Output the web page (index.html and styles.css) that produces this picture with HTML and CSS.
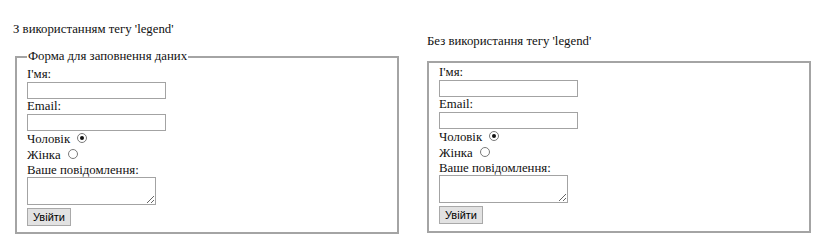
FILE: index.html
```html
<!DOCTYPE html>
<html lang="uk">
<head>
<meta charset="utf-8">
<title>Форми</title>
<link rel="stylesheet" href="styles.css">
</head>
<body>
<div class="page">
  <div class="col col-left">
    <p class="title">З використанням тегу 'legend'</p>
    <fieldset class="box fs">
      <legend class="legend">Форма для заповнення даних</legend>
      <label class="lbl">І'мя:</label>
      <input class="txt" type="text">
      <label class="lbl">Email:</label>
      <input class="txt" type="text">
      <div class="radio-row">Чоловік <input class="radio" type="radio" name="g1" checked></div>
      <div class="radio-row">Жінка <input class="radio" type="radio" name="g1"></div>
      <label class="lbl lbl-msg">Ваше повідомлення:</label>
      <textarea class="area"></textarea>
      <button class="btn" type="button">Увійти</button>
    </fieldset>
  </div>
  <div class="col col-right">
    <p class="title">Без використання тегу 'legend'</p>
    <div class="box plain">
      <label class="lbl">І'мя:</label>
      <input class="txt" type="text">
      <label class="lbl">Email:</label>
      <input class="txt" type="text">
      <div class="radio-row">Чоловік <input class="radio" type="radio" name="g2" checked></div>
      <div class="radio-row">Жінка <input class="radio" type="radio" name="g2"></div>
      <label class="lbl lbl-msg">Ваше повідомлення:</label>
      <textarea class="area"></textarea>
      <button class="btn" type="button">Увійти</button>
    </div>
  </div>
</div>
</body>
</html>
```

FILE: styles.css
```css
html, body {
  margin: 0;
  padding: 0;
  background: #fff;
}
body {
  font-family: "Liberation Serif", "Times New Roman", serif;
  font-size: 12.8px;
  line-height: 15px;
  color: #111;
}
.page {
  display: flex;
  align-items: flex-start;
  padding-left: 13px;
  gap: 24px;
}
.col {
  display: flex;
  flex-direction: column;
}
.col-left {
  width: 390px;
  padding-top: 22px;
}
.col-right {
  width: 384px;
  padding-top: 34px;
}
.title {
  margin: 0;
  height: 15px;
}
.col-left .title {
  margin-bottom: 12px;
}
.col-right .title {
  margin-bottom: 12px;
}
.box {
  display: flex;
  flex-direction: column;
  align-items: flex-start;
  border: 2px solid #a4a4a4;
  box-sizing: border-box;
  width: 384px;
}
.fs {
  margin: 0 2px;
  padding: 3px 10px 6px 10px;
  min-width: 0;
}
.plain {
  padding: 2px 10px 7px 10px;
}
.legend {
  padding: 0 1px;
  line-height: 15px;
}
.lbl {
  display: block;
  height: 15px;
}
.lbl-msg {
  height: 14px;
}
.txt {
  display: block;
  box-sizing: border-box;
  width: 139px;
  height: 17px;
  margin: 0;
  padding: 0 2px;
  border: 1px solid #a3a3a3;
  background: #fff;
  font-size: 11px;
}
.radio-row {
  display: flex;
  align-items: center;
  height: 16px;
}
.radio {
  appearance: none;
  -webkit-appearance: none;
  box-sizing: border-box;
  width: 10px;
  height: 10px;
  margin: -2px 0 0 7px;
  border: 1px solid #7a7a7a;
  border-radius: 50%;
  background: #fff;
  display: grid;
  place-content: center;
}
.radio:checked::before {
  content: "";
  display: block;
  width: 4px;
  height: 4px;
  border-radius: 50%;
  background: #111;
}
.area {
  display: block;
  box-sizing: border-box;
  width: 129px;
  height: 28px;
  margin: 0;
  padding: 1px;
  border: 1px solid #a3a3a3;
  font-family: "Liberation Mono", monospace;
  font-size: 11px;
}
.btn {
  box-sizing: border-box;
  margin-top: 3px;
  width: 44px;
  height: 18px;
  padding: 0;
  border: 1px solid #a9a9a9;
  border-radius: 0;
  background: #e2e2e2;
  font-family: "Liberation Sans", Arial, sans-serif;
  font-size: 11px;
  line-height: 16px;
  color: #000;
}
```
